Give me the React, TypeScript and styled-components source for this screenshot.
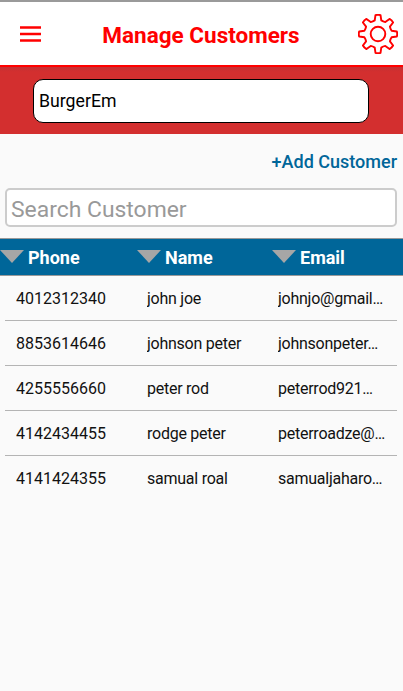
import { createGlobalStyle } from "styled-components";
import styled from "styled-components";

const GlobalStyle = createGlobalStyle`
  html, body {
    margin: 0;
    padding: 0;
    background: #fafafa;
    font-family: Roboto, "Noto Sans", sans-serif;
  }
  * {
    box-sizing: border-box;
  }
`;

const Screen = styled.div`
  width: 403px;
  height: 691px;
  overflow: hidden;
  background: #fafafa;
  border-top: 2px solid #9a9a9a;
`;

const TopBar = styled.header`
  height: 65px;
  display: flex;
  align-items: center;
  justify-content: space-between;
  padding: 0 5px 0 20px;
  background: #fff;
  border-bottom: 2px solid #ff0000;
`;

const Title = styled.h1`
  margin: 3px 0 0 2px;
  font-size: 22.5px;
  font-weight: 700;
  color: #ff0000;
`;

const StoreBand = styled.div`
  height: 67px;
  display: flex;
  align-items: center;
  padding: 0 34px 0 33px;
  background: linear-gradient(#c53034, #d32f2f 5px);
`;

const StoreInput = styled.div`
  width: 100%;
  height: 44px;
  display: flex;
  align-items: center;
  padding-left: 5px;
  font-size: 17.7px;
  color: #000;
  background: #fff;
  border: 1px solid #000;
  border-radius: 10px;
`;

const AddRow = styled.div`
  display: flex;
  justify-content: flex-end;
  padding: 18px 6px 0 0;
  line-height: 20px;
`;

const AddLink = styled.a`
  font-size: 18px;
  font-weight: 500;
  color: #006699;
`;

const SearchBox = styled.div`
  height: 39px;
  margin: 16px 6px 0 5px;
  display: flex;
  align-items: center;
  padding: 4px 0 0 4px;
  font-size: 22.9px;
  color: #999;
  background: #fff;
  border: 2px solid #ccc;
  border-radius: 5px;
`;

const TableHead = styled.div`
  height: 38px;
  margin-top: 11px;
  display: grid;
  grid-template-columns: 137px 135px 1fr;
  align-items: center;
  background: #006699;
  border-top: 1px solid #999;
  border-bottom: 1px solid #999;
`;

const HeadCell = styled.div`
  display: flex;
  align-items: center;
  gap: 4px;
  padding-top: 1px;
  font-size: 18px;
  font-weight: 700;
  color: #fff;
`;

const SortArrow = styled.span`
  width: 0;
  height: 0;
  margin-top: -2px;
  border-left: 12px solid transparent;
  border-right: 12px solid transparent;
  border-top: 13px solid #a6a6a6;
`;

const Row = styled.div`
  height: 45px;
  margin: 0 6px 0 5px;
  display: grid;
  grid-template-columns: 131px 131px 1fr;
  align-items: center;
  padding-left: 11px;
  font-size: 16px;
  color: #111;
  border-bottom: 1px solid #b4b4b4;

  &:last-child {
    border-bottom: none;
  }
`;

const Cell = styled.div<{ $text?: boolean }>`
  white-space: nowrap;
  overflow: hidden;
  letter-spacing: ${(p) => (p.$text ? "-0.25px" : "0")};
`;

const customers = [
  { phone: "4012312340", name: "john joe", email: "johnjo@gmail…" },
  { phone: "8853614646", name: "johnson peter", email: "johnsonpeter…" },
  { phone: "4255556660", name: "peter rod", email: "peterrod921…" },
  { phone: "4142434455", name: "rodge peter", email: "peterroadze@…" },
  { phone: "4141424355", name: "samual roal", email: "samualjaharo…" },
];

function MenuIcon() {
  return (
    <svg width="22" height="16" viewBox="0 0 22 16">
      <path d="M0 1.5h21M0 8h21M0 14.5h21" stroke="#f00" strokeWidth="2.4" fill="none" />
    </svg>
  );
}

function gearPath() {
  const teeth = 8;
  const cx = 20;
  const cy = 20;
  const outer = 19;
  const inner = 14;
  const pts: string[] = [];
  for (let i = 0; i < teeth; i++) {
    const a = (i * 2 * Math.PI) / teeth - Math.PI / 2;
    const step = (2 * Math.PI) / teeth;
    const p = (r: number, t: number) =>
      `${(cx + r * Math.cos(a + t * step)).toFixed(2)} ${(cy + r * Math.sin(a + t * step)).toFixed(2)}`;
    pts.push(`${i === 0 ? "M" : "L"}${p(inner, -0.3)}`);
    pts.push(`L${p(outer, -0.17)}`);
    pts.push(`Q${p(outer + 0.6, 0)} ${p(outer, 0.17)}`);
    pts.push(`L${p(inner, 0.3)}`);
    pts.push(`Q${p(inner - 0.6, 0.5)} ${p(inner, 0.7)}`);
  }
  return pts.join(" ") + "Z";
}

function GearIcon() {
  return (
    <svg width="40" height="40" viewBox="0 0 40 40" fill="none" stroke="#f00" strokeWidth="1.9" strokeLinejoin="round">
      <path d={gearPath()} />
      <circle cx="20" cy="20" r="7.3" />
    </svg>
  );
}

export default function App() {
  return (
    <Screen>
      <GlobalStyle />
      <TopBar>
        <MenuIcon />
        <Title>Manage Customers</Title>
        <GearIcon />
      </TopBar>
      <StoreBand>
        <StoreInput>BurgerEm</StoreInput>
      </StoreBand>
      <AddRow>
        <AddLink>+Add Customer</AddLink>
      </AddRow>
      <SearchBox>Search Customer</SearchBox>
      <TableHead>
        <HeadCell>
          <SortArrow />
          Phone
        </HeadCell>
        <HeadCell>
          <SortArrow />
          Name
        </HeadCell>
        <HeadCell>
          <SortArrow />
          Email
        </HeadCell>
      </TableHead>
      {customers.map((c) => (
        <Row key={c.phone}>
          <Cell>{c.phone}</Cell>
          <Cell $text>{c.name}</Cell>
          <Cell $text>{c.email}</Cell>
        </Row>
      ))}
    </Screen>
  );
}
